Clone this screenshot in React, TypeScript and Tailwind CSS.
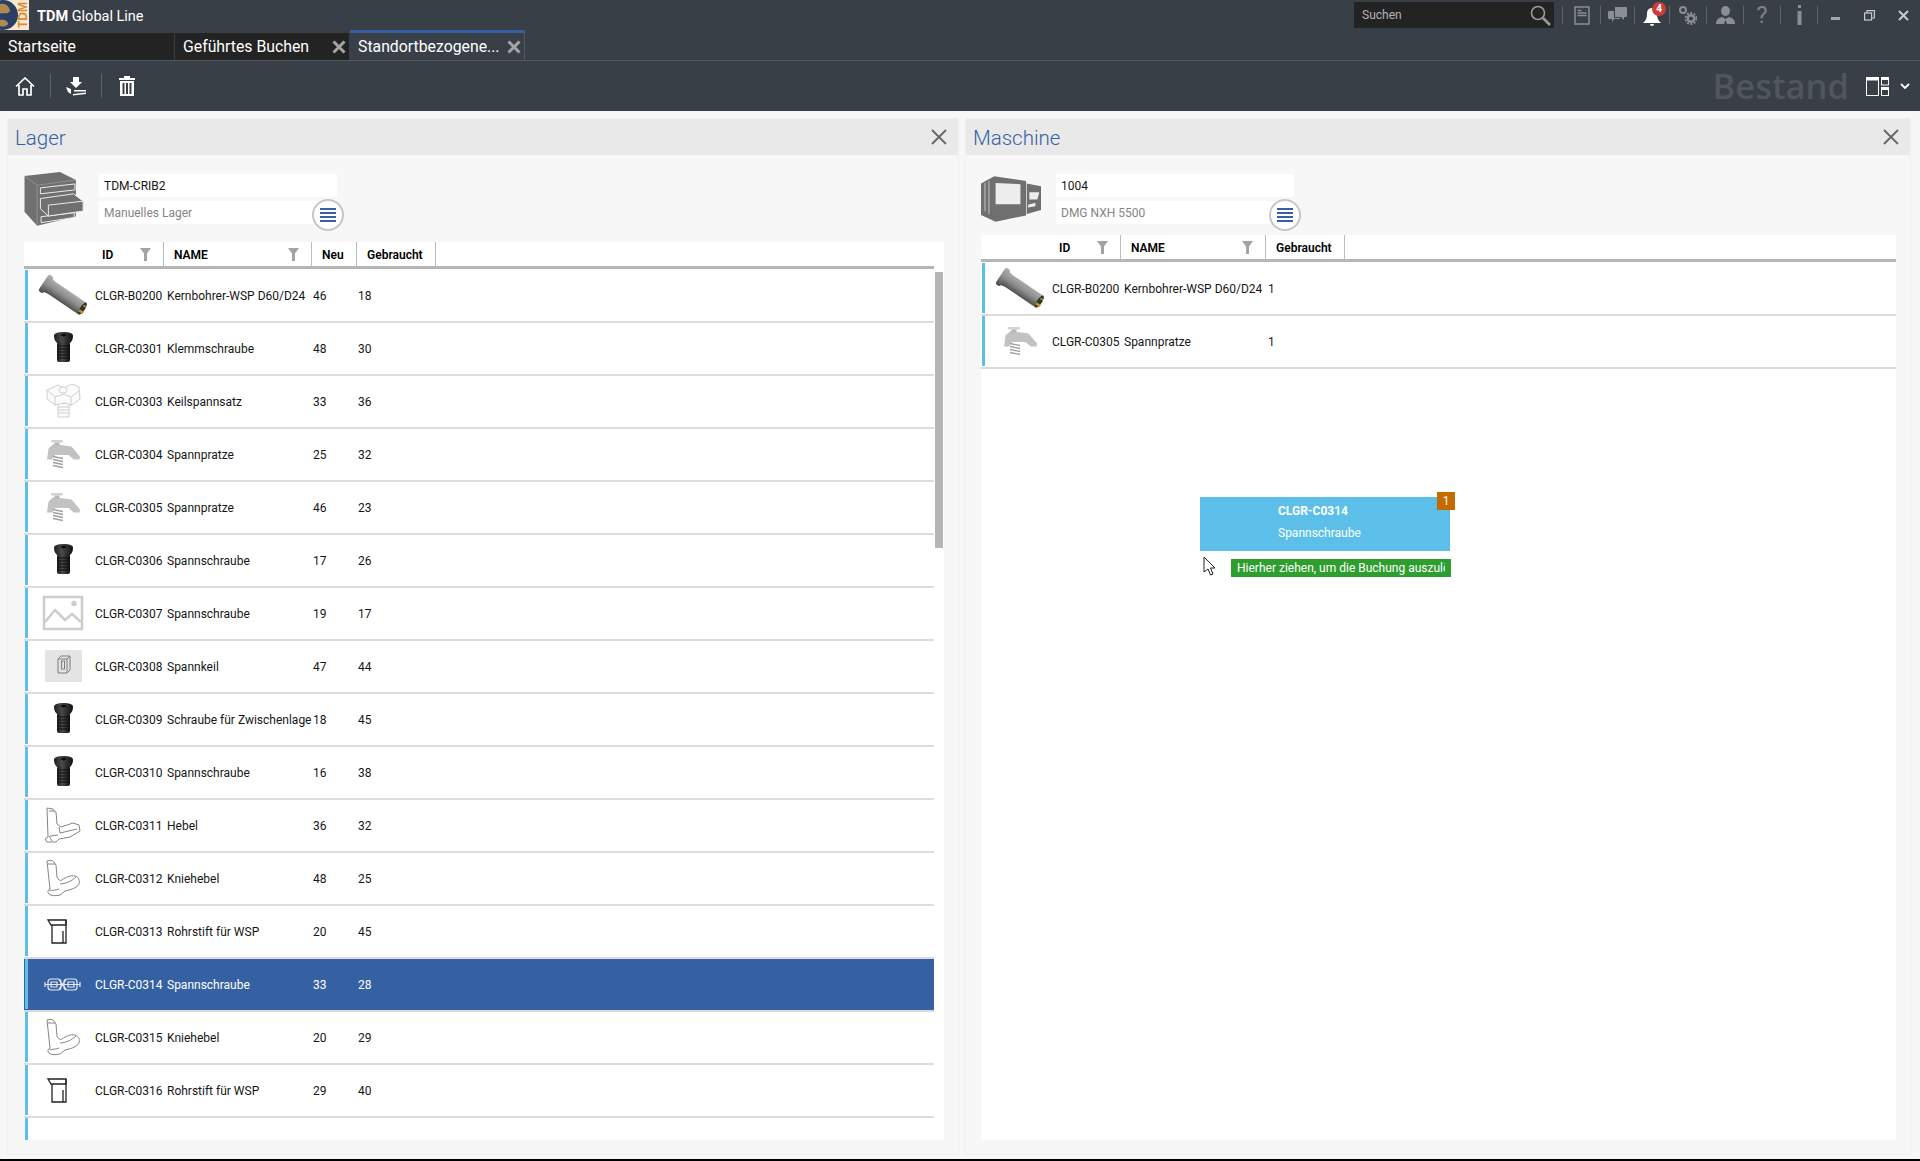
import { ReactNode } from "react";

type Thumb = "bore" | "screw" | "keil" | "pratze" | "none" | "keilbox" | "hebel" | "knie" | "stift" | "chain";
type Row = { id: string; name: string; neu?: number; gebr?: number; thumb?: Thumb };

const LAGER: Row[] = [
  { id: "CLGR-B0200", name: "Kernbohrer-WSP D60/D24", neu: 46, gebr: 18, thumb: "bore" },
  { id: "CLGR-C0301", name: "Klemmschraube", neu: 48, gebr: 30, thumb: "screw" },
  { id: "CLGR-C0303", name: "Keilspannsatz", neu: 33, gebr: 36, thumb: "keil" },
  { id: "CLGR-C0304", name: "Spannpratze", neu: 25, gebr: 32, thumb: "pratze" },
  { id: "CLGR-C0305", name: "Spannpratze", neu: 46, gebr: 23, thumb: "pratze" },
  { id: "CLGR-C0306", name: "Spannschraube", neu: 17, gebr: 26, thumb: "screw" },
  { id: "CLGR-C0307", name: "Spannschraube", neu: 19, gebr: 17, thumb: "none" },
  { id: "CLGR-C0308", name: "Spannkeil", neu: 47, gebr: 44, thumb: "keilbox" },
  { id: "CLGR-C0309", name: "Schraube für Zwischenlage", neu: 18, gebr: 45, thumb: "screw" },
  { id: "CLGR-C0310", name: "Spannschraube", neu: 16, gebr: 38, thumb: "screw" },
  { id: "CLGR-C0311", name: "Hebel", neu: 36, gebr: 32, thumb: "hebel" },
  { id: "CLGR-C0312", name: "Kniehebel", neu: 48, gebr: 25, thumb: "knie" },
  { id: "CLGR-C0313", name: "Rohrstift für WSP", neu: 20, gebr: 45, thumb: "stift" },
  { id: "CLGR-C0314", name: "Spannschraube", neu: 33, gebr: 28, thumb: "chain" },
  { id: "CLGR-C0315", name: "Kniehebel", neu: 20, gebr: 29, thumb: "knie" },
  { id: "CLGR-C0316", name: "Rohrstift für WSP", neu: 29, gebr: 40, thumb: "stift" },
];

const MASCHINE: Row[] = [
  { id: "CLGR-B0200", name: "Kernbohrer-WSP D60/D24", gebr: 1, thumb: "bore" },
  { id: "CLGR-C0305", name: "Spannpratze", gebr: 1, thumb: "pratze" },
];

function ThumbIcon({ kind }: { kind: Thumb }) {
  const svg = (body: ReactNode) => (
    <svg width="60" height="50" viewBox="0 0 60 50" fill="none">
      {body}
    </svg>
  );
  if (kind === "bore")
    return svg(
      <>
        <defs>
          <linearGradient id="boreG" x1="0" y1="0" x2="0" y2="1">
            <stop offset="0" stopColor="#b0b0b0" />
            <stop offset="0.5" stopColor="#8c8c8c" />
            <stop offset="1" stopColor="#474747" />
          </linearGradient>
        </defs>
        <g transform="translate(13 14) rotate(34)">
          <path d="M2 -8L7 -7H44V7H7L2 8z" fill="url(#boreG)" />
          <rect x="-3" y="-10" width="6" height="20" rx="3" fill="url(#boreG)" />
          <ellipse cx="44" cy="0" rx="2.500" ry="7" fill="#333" />
          <rect x="42" y="2" width="5" height="2.500" fill="#c9951f" />
          <rect x="43" y="-4" width="3" height="1.500" fill="#c9951f" />
        </g>
      </>
    );
  if (kind === "screw")
    return svg(
      <>
        <defs>
          <linearGradient id="screwG" x1="0" y1="0" x2="1" y2="0">
            <stop offset="0" stopColor="#1c1c1c" />
            <stop offset="0.4" stopColor="#4a4a4a" />
            <stop offset="1" stopColor="#111" />
          </linearGradient>
        </defs>
        <path d="M21 13c0-3 4-4 9.500-4s9.500 1 9.500 4c0 4-2 6-3 7H24c-1-1-3-3-3-7z" fill="url(#screwG)" />
        <rect x="24" y="19" width="13" height="20" rx="2" fill="url(#screwG)" />
        <path d="M24 23h13M24 26h13M24 29h13M24 32h13M24 35h13" stroke="#0c0c0c" strokeWidth="1" />
        <path d="M27 12l3.500-1.500 3.500 1.500-3.500 1.500z" fill="#0a0a0a" />
      </>
    );
  if (kind === "keil")
    return svg(
      <g stroke="#cfcfcf" strokeWidth="1" fill="#fbfbfb">
        <rect x="25" y="27" width="11" height="14" />
        <path d="M25 31h11M25 34h11M25 37h11" />
        <path d="M14 14l11-5 6 3 8-4 7 3 1 12-8 6-8-2-9 2-8-6z" />
        <path d="M14 14l8 7 9-3 7 3 8-6M22 21v9M38 21v9" />
        <ellipse cx="30" cy="14" rx="4" ry="3" />
      </g>
    );
  if (kind === "pratze")
    return svg(
      <>
        <path d="M14 30.500L15.500 19.500L20.500 15L38.500 17.500L47 27.500L46.500 30.500H41L35.500 26H22L19 30.500z" fill="#c2c2c2" />
        <rect x="18" y="11" width="12" height="2.500" rx="1.200" fill="#d2d2d2" />
        <rect x="21.500" y="13.500" width="5" height="3" fill="#b8b8b8" />
        <path d="M20 27.500l10 2M20 30.500l10 2M20 33.500l10 2M20 36.500l10 2" stroke="#a0a0a0" strokeWidth="1.300" />
      </>
    );
  if (kind === "none")
    return svg(
      <g stroke="#cdcdcd" strokeWidth="2.500">
        <rect x="11" y="9" width="38" height="32" />
        <path d="M12 34l10-12 10 10 7-6 9 8" />
        <circle cx="41" cy="15.500" r="1.500" fill="#cdcdcd" />
      </g>
    );
  if (kind === "keilbox")
    return svg(
      <>
        <rect x="12" y="9" width="37" height="32" fill="#e4e4e4" />
        <g stroke="#7d7d7d" strokeWidth="1">
          <path d="M25 18l3-3h9v14l-3 3h-9z" />
          <path d="M25 18h9v14M34 18l3-3" />
          <rect x="28.500" y="20" width="3" height="8" />
        </g>
      </>
    );
  if (kind === "hebel")
    return svg(
      <g stroke="#777" strokeWidth="0.900">
        <path d="M14 8l6 1 1 2 2 1 1 12 4 3 12-4 6 2 1 6-10 6-11 2-3 3-9 0-2-3 3-2z" />
        <path d="M16 11l5 0M26 27l1 6 17-4M16 36l3 5M17 36l8-1" />
      </g>
    );
  if (kind === "knie")
    return svg(
      <g stroke="#777" strokeWidth="0.900">
        <path d="M14 8c2-1 6-1 7 1l2 3 1 12c1 3 3 4 5 3 4-3 9-5 13-4 4 1 5 5 4 8-2 4-9 6-14 7l-5 4c-4 1-9 1-11-1-2-2-1-4 1-5z" />
        <path d="M15 11h7M27 31c5 0 12-3 16-7M16 37c3 1 7 0 10-1" />
      </g>
    );
  if (kind === "stift")
    return svg(
      <g stroke="#222" strokeWidth="1.300">
        <path d="M15 14h18v5H18z" />
        <path d="M19 19v18h14V14M30 25v12" />
      </g>
    );
  return svg(
    <g stroke="#e6eaf1" strokeWidth="1.200">
      <path d="M12 25.500h35" />
      <rect x="15" y="20" width="13" height="11" rx="3" />
      <rect x="31" y="20" width="13" height="11" rx="3" />
      <path d="M26 21l7 9M33 21l-7 9M18 23h6v5h-6zM35 23h6v5h-6z" />
      <path d="M12 23v5M47 23v5" />
    </g>
  );
}

function CribIcon() {
  return (
    <svg width="60" height="54" viewBox="28 30 178 163">
      <path d="M28 42l107-12 48 24v110l-117 28-38-42z" fill="#707070" />
      <path d="M28 42l38 28 117-16" stroke="#a2a2a2" strokeWidth="2" fill="none" />
      <path d="M66 70v122" stroke="#a2a2a2" strokeWidth="2" />
      <path d="M76 78l104-12v18l-104 12zM78 165l100-12v14l-100 16z" fill="#707070" stroke="#ececec" strokeWidth="3" />
      <path d="M76 110l100-14 29 22v30l-105 15-24-22z" fill="#707070" stroke="#ececec" strokeWidth="3" />
      <path d="M100 130l105-12M100 130v32" stroke="#ececec" strokeWidth="3" />
    </svg>
  );
}

function MachineIcon() {
  return (
    <svg width="60" height="46" viewBox="62 178 181 137">
      <path d="M62 200l40-22 96 14v104l-92 19-44-20z" fill="#6f6f6f" />
      <path d="M106 198l75 4v60h-75z" fill="#ededed" />
      <path d="M200 200l43 8v72l-43 12z" fill="#6f6f6f" />
      <path d="M208 226l30 0-6 22h-24z" fill="#ededed" />
      <path d="M204 264l22-6v10l-22 4z" fill="#ededed" />
      <path d="M86 192v100M74 198v86" stroke="#ededed" strokeWidth="2" />
    </svg>
  );
}

function FilterIcon() {
  return (
    <svg width="11" height="13" viewBox="0 0 11 13" fill="#a3a3a3">
      <path d="M0 0h11L7 5.500V13H4V5.500z" />
    </svg>
  );
}

function GridRow({ row, selected, hasNeu }: { row: Row; selected?: boolean; hasNeu: boolean }) {
  return (
    <div className={`h-[53px] shrink-0 border-b-2 pb-px ${selected ? "border-[#d9d9d9] bg-[#3561a3] text-white" : "border-[#dcdcdc] text-[#161616]"}`}>
      <div className="flex h-full items-center">
        <div className="ml-px h-full w-[3px] shrink-0 bg-[#5bbfe9]" />
        <div className="ml-[5px] w-[60px] shrink-0">{row.thumb && <ThumbIcon kind={row.thumb} />}</div>
        <div className="ml-[2px] w-[72px] shrink-0 whitespace-nowrap pt-px">{row.id}</div>
        <div className={`${hasNeu ? "w-[146px]" : "w-[144px]"} shrink-0 whitespace-nowrap pt-px`}>{row.name}</div>
        {hasNeu && <div className="w-[45px] shrink-0 pt-px">{row.neu}</div>}
        <div className="pt-px">{row.gebr}</div>
      </div>
    </div>
  );
}

function HeadCell({ label, width, filter }: { label: string; width: string; filter?: boolean }) {
  return (
    <div className={`flex h-full shrink-0 items-center justify-between border-r border-[#bdbdbd] pl-[10px] pr-[12px] ${width}`}>
      <span className="pt-px">{label}</span>
      {filter && <FilterIcon />}
    </div>
  );
}

function Field({ value, muted }: { value: string; muted?: boolean }) {
  return (
    <div className={`flex h-[23px] w-[238px] items-center bg-white pl-[5px] ${muted ? "text-[#858585]" : "text-[#161616]"}`}>{value}</div>
  );
}

function InfoBlock({ icon, title, sub, offset }: { icon: ReactNode; title: string; sub: string; offset: string }) {
  return (
    <div className={`flex items-center pt-[19px] ${offset}`}>
      <div className="flex h-[50px] w-[60px] shrink-0 items-center justify-center">{icon}</div>
      <div className="relative ml-[15px] flex flex-col gap-[4px]">
        <Field value={title} />
        <Field value={sub} muted />
        <div className="absolute right-[-7px] top-[25px] flex h-[32px] w-[32px] flex-col items-center justify-center gap-[2px] rounded-full border-2 border-[#c6c6c6] bg-white">
          <span className="h-[2px] w-[16px] bg-[#3561a3]" />
          <span className="h-[2px] w-[16px] bg-[#3561a3]" />
          <span className="h-[2px] w-[16px] bg-[#3561a3]" />
          <span className="h-[2px] w-[16px] bg-[#3561a3]" />
        </div>
      </div>
    </div>
  );
}

function PanelHead({ title }: { title: string }) {
  return (
    <div className="flex h-[36px] shrink-0 items-center justify-between bg-[#e9e9e9] pl-[7px] pr-[10px]">
      <span className="pt-[2px] text-[20.500px] font-light text-[#3561a3]">{title}</span>
      <svg width="18" height="18" viewBox="0 0 18 18" stroke="#666" strokeWidth="1.800">
        <path d="M2 2l14 14M16 2L2 16" />
      </svg>
    </div>
  );
}

function LagerPanel() {
  return (
    <section className="flex w-[952px] shrink-0 flex-col border border-[#f0f0f0]">
      <PanelHead title="Lager" />
      <InfoBlock icon={<CribIcon />} title="TDM-CRIB2" sub="Manuelles Lager" offset="pl-[16px]" />
      <div className="ml-[16px] mt-[18px] flex w-[920px] min-h-0 flex-1 flex-col bg-white">
        <div className="flex h-[24px] shrink-0 items-center font-semibold text-black">
          <div className="flex h-full w-[140px] shrink-0 items-center justify-between border-r border-[#bdbdbd] pl-[78px] pr-[12px]">
            <span className="pt-px">ID</span>
            <FilterIcon />
          </div>
          <HeadCell label="NAME" width="w-[148px]" filter />
          <HeadCell label="Neu" width="w-[45px]" />
          <HeadCell label="Gebraucht" width="w-[79px]" />
        </div>
        <div className="mr-[10px] h-[3px] shrink-0 bg-[#b5b5b5]" />
        <div className="flex min-h-0 flex-1 pt-px">
          <div className="flex w-[910px] shrink-0 flex-col overflow-hidden">
            {LAGER.map((r) => (
              <GridRow key={r.id} row={r} hasNeu selected={r.id === "CLGR-C0314"} />
            ))}
            <GridRow row={{ id: "", name: "" }} hasNeu={false} />
          </div>
          <div className="ml-px mt-[2px] h-[276px] w-[8px] bg-[#b5b5b5]" />
        </div>
      </div>
      <div className="h-[14px] shrink-0" />
    </section>
  );
}

function MaschinePanel() {
  return (
    <section className="flex w-[946px] shrink-0 flex-col border border-[#f0f0f0]">
      <PanelHead title="Maschine" />
      <InfoBlock icon={<MachineIcon />} title="1004" sub="DMG NXH 5500" offset="pl-[15px]" />
      <div className="ml-[15px] mt-[11px] flex w-[915px] min-h-0 flex-1 flex-col bg-white">
        <div className="flex h-[24px] shrink-0 items-center font-semibold text-black">
          <div className="flex h-full w-[140px] shrink-0 items-center justify-between border-r border-[#bdbdbd] pl-[78px] pr-[12px]">
            <span className="pt-px">ID</span>
            <FilterIcon />
          </div>
          <HeadCell label="NAME" width="w-[145px]" filter />
          <HeadCell label="Gebraucht" width="w-[79px]" />
        </div>
        <div className="h-[3px] shrink-0 bg-[#b5b5b5]" />
        <div className="pt-px">
          {MASCHINE.map((r) => (
            <GridRow key={r.id} row={r} hasNeu={false} />
          ))}
        </div>
      </div>
      <div className="h-[14px] shrink-0" />
    </section>
  );
}

function Sep() {
  return <span className="h-[18px] w-px shrink-0 bg-[#5f646a]" />;
}

function Cell({ w, children }: { w: string; children: ReactNode }) {
  return <div className={`relative flex h-full shrink-0 items-center justify-center ${w}`}>{children}</div>;
}

function TitleIcons() {
  return (
    <div className="flex h-full items-center">
      <div className="w-[8px]" />
      <Sep />
      <Cell w="w-[37px]">
        <svg width="16" height="19" viewBox="0 0 16 19" fill="none" stroke="#8b8f94" strokeWidth="1.500">
          <rect x="1" y="1" width="14" height="17" />
          <path d="M3.500 4.500h4M3.500 7h9M3.500 9.500h9" />
        </svg>
      </Cell>
      <Sep />
      <Cell w="w-[33px]">
        <svg width="19" height="18" viewBox="0 0 19 18" fill="#8b8f94">
          <path d="M7 1h11a1 1 0 011 1v8a1 1 0 01-1 1h-2v3l-3-3H7z" />
          <path d="M1 5h5v7h6v1H6l-2 3v-3H1a1 1 0 01-1-1V6a1 1 0 011-1z" />
        </svg>
      </Cell>
      <Sep />
      <Cell w="w-[34px]">
        <svg width="18" height="20" viewBox="0 0 18 20" fill="#ffffff" className="mt-[4px]">
          <path d="M9 1c3 0 5 2 5 6 0 4 1 6 4 9H0c3-3 4-5 4-9 0-4 2-6 5-6zM7 17h4a2 2 0 01-4 0z" />
        </svg>
        <span className="absolute left-[17px] top-[2px] flex h-[14px] w-[14px] items-center justify-center rounded-full bg-[#cf3a3a] text-[10px] font-bold leading-none text-white">4</span>
      </Cell>
      <Sep />
      <Cell w="w-[36px]">
        <svg width="18" height="19" viewBox="0 0 18 19" fill="#8b8f94">
          <circle cx="4" cy="4" r="3" fill="none" stroke="#8b8f94" strokeWidth="2" />
          <circle cx="12" cy="12.500" r="3.300" fill="none" stroke="#8b8f94" strokeWidth="2.500" />
          <circle cx="12" cy="12.500" r="5.500" fill="none" stroke="#8b8f94" strokeWidth="1.800" strokeDasharray="2 1.500" />
        </svg>
      </Cell>
      <Sep />
      <Cell w="w-[36px]">
        <svg width="19" height="18" viewBox="0 0 19 18" fill="#8b8f94">
          <ellipse cx="9.500" cy="5" rx="4.500" ry="5" />
          <path d="M0 18c0-4 2-6 6-7l3.500 2 3.500-2c4 1 6 3 6 7h-8l-1.500-4-1.500 4z" />
        </svg>
      </Cell>
      <Sep />
      <Cell w="w-[36px]">
        <span className="text-[24px] leading-none text-[#7f8388]">?</span>
      </Cell>
      <Sep />
      <Cell w="w-[36px]">
        <svg width="5" height="20" viewBox="0 0 5 20" fill="#8b8f94">
          <rect x="1" y="0" width="3" height="3" />
          <rect x="0.500" y="6" width="4" height="14" />
        </svg>
      </Cell>
      <Sep />
      <Cell w="w-[34px]">
        <span className="mt-[7px] h-[3px] w-[9px] bg-[#a3a6aa]" />
      </Cell>
      <Cell w="w-[34px]">
        <svg width="11" height="11" viewBox="0 0 11 11" fill="none" stroke="#c9cbcd" strokeWidth="1.200">
          <rect x="0.600" y="3" width="7" height="7" />
          <path d="M3 3V0.600h7.400V8H8" />
        </svg>
      </Cell>
      <Cell w="w-[34px]">
        <svg width="11" height="11" viewBox="0 0 11 11" stroke="#c9cbcd" strokeWidth="2">
          <path d="M1 1l9 9M10 1l-9 9" />
        </svg>
      </Cell>
    </div>
  );
}

function Tab({ label, active, closable }: { label: string; active?: boolean; closable?: boolean }) {
  return (
    <div
      className={`flex shrink-0 items-center justify-between pl-[8px] pr-[3px] text-[15.800px] text-white ${
        active ? "h-[30px] w-[175px] border-t-[3px] border-r border-[#3561a3] border-r-[#55595e] bg-[#393f47] pt-px" : "h-[27px] w-[174px] bg-[#232323] pt-px"
      }`}
    >
      <span className="whitespace-nowrap">{label}</span>
      {closable && (
        <svg width="14" height="14" viewBox="0 0 14 14" stroke="#a5a5a5" strokeWidth="3">
          <path d="M1.500 1.500l11 11M12.500 1.500l-11 11" />
        </svg>
      )}
    </div>
  );
}

export default function App() {
  return (
    <div className="relative flex h-[1161px] w-[1920px] flex-col overflow-hidden bg-[#f7f7f7] text-[12px] [font-family:Roboto,sans-serif]">
      <header className="flex h-[111px] shrink-0 flex-col bg-[#393f47]">
        <div className="flex h-[30px] shrink-0 items-center">
          <svg width="29" height="30" viewBox="0 0 29 30">
            <rect width="29" height="30" fill="#f6e9d4" />
            <circle cx="3" cy="15" r="15" fill="#2a3f63" />
            <path d="M-2 5c6-3 11 0 12 6-3 4-7 1-12 3zM0 20c4-1 8 1 8 4-2 3-5 3-8 2z" fill="#b08a52" />
            <text x="0" y="0" transform="translate(27 28) rotate(-90)" fontSize="12" fontWeight="700" fill="#dd8a2c" fontFamily="Liberation Sans, sans-serif">TDM</text>
          </svg>
          <div className="ml-[8px] pt-[3px] text-[14.500px] text-white">
            <span className="font-bold">TDM</span> Global Line
          </div>
          <div className="ml-auto flex h-[26px] w-[200px] items-center justify-between bg-[#232323] pl-[8px] pr-[3px] text-[#b4b4b4]">
            <span>Suchen</span>
            <svg width="21" height="21" viewBox="0 0 21 21" fill="none" stroke="#9a9a9a">
              <circle cx="8" cy="8" r="6.500" strokeWidth="1.600" />
              <path d="M13 13l7 7" strokeWidth="2.600" />
            </svg>
          </div>
          <TitleIcons />
        </div>
        <div className="flex h-[31px] shrink-0 items-end border-b border-[#55595e]">
          <Tab label="Startseite" />
          <div className="w-px" />
          <Tab label="Geführtes Buchen" closable />
          <div className="w-px" />
          <Tab label="Standortbezogene..." active closable />
        </div>
        <div className="flex min-h-0 flex-1 items-center">
          <svg width="20" height="19" viewBox="0 0 20 19" fill="none" stroke="#ffffff" strokeWidth="1.700" className="ml-[15px]">
            <path d="M1 9.500L10 1l9 8.500M4 8v10h4v-6h4v6h4V8" />
          </svg>
          <span className="ml-[15px] h-[24px] w-px bg-[#5f646a]" />
          <svg width="20" height="19" viewBox="0 0 20 19" fill="#ffffff" className="ml-[15px]">
            <path d="M7 0h6v5h3l-6 6-6-6h3zM0 10l5 2v5L2 15zM8 13h12v1.500H8zM7 17l13-1.500V17l-13 1.500z" />
          </svg>
          <span className="ml-[15px] h-[24px] w-px bg-[#5f646a]" />
          <svg width="16" height="20" viewBox="0 0 16 20" fill="#ffffff" className="ml-[17px]">
            <path d="M5 0h6v2h5v2H0V2h5zM1 5h14v15H1zM3.500 7v11h2V7zM7 7v11h2V7zM10.500 7v11h2V7z" fillRule="evenodd" />
          </svg>
          <span className="ml-auto text-[34.500px] font-semibold leading-none text-[#50565c] [font-family:'Open_Sans',sans-serif]">Bestand</span>
          <svg width="23" height="19" viewBox="0 0 23 19" fill="none" stroke="#ffffff" className="ml-[17px]">
            <rect x="0.500" y="0.500" width="12" height="18" />
            <path d="M0 2h13" strokeWidth="3" />
            <rect x="15.500" y="0.500" width="7" height="7.500" />
            <rect x="15.500" y="10.500" width="7" height="8" />
            <path d="M15 2h8M15 12h8" strokeWidth="2" />
          </svg>
          <svg width="10" height="7" viewBox="0 0 10 7" fill="none" stroke="#ffffff" strokeWidth="1.800" className="ml-[11px] mr-[10px]">
            <path d="M1 1l4 4 4-4" />
          </svg>
        </div>
      </header>

      <main className="flex min-h-0 flex-1 gap-[6px] pb-[4px] pl-[7px] pt-[7px]">
        <LagerPanel />
        <MaschinePanel />
      </main>
      <div className="h-[2px] shrink-0 bg-black" />

      {/* drag ghost */}
      <div className="absolute left-[1200px] top-[497px] h-[54px] w-[250px] bg-[#5bbfe9] text-white">
        <div className="absolute left-[78px] top-[5px] font-bold">CLGR-C0314</div>
        <div className="absolute left-[78px] top-[27px]">Spannschraube</div>
        <div className="absolute -top-[5px] left-[237px] flex h-[18px] w-[18px] items-center justify-center bg-[#c46a00]">1</div>
      </div>
      <svg width="13" height="20" viewBox="0 0 13 20" className="absolute left-[1203px] top-[556px]" fill="#ffffff" stroke="#222" strokeWidth="1">
        <path d="M1 1v15l4-3 2.500 6 2.500-1-2.500-6H12z" />
      </svg>
      <div className="absolute left-[1231px] top-[559px] h-[18px] w-[220px] whitespace-nowrap bg-[#2e9e2e] pl-[6px] pr-[6px] text-white">
        <div className="overflow-hidden leading-[18px]">Hierher ziehen, um die Buchung auszulösen</div>
      </div>
    </div>
  );
}
